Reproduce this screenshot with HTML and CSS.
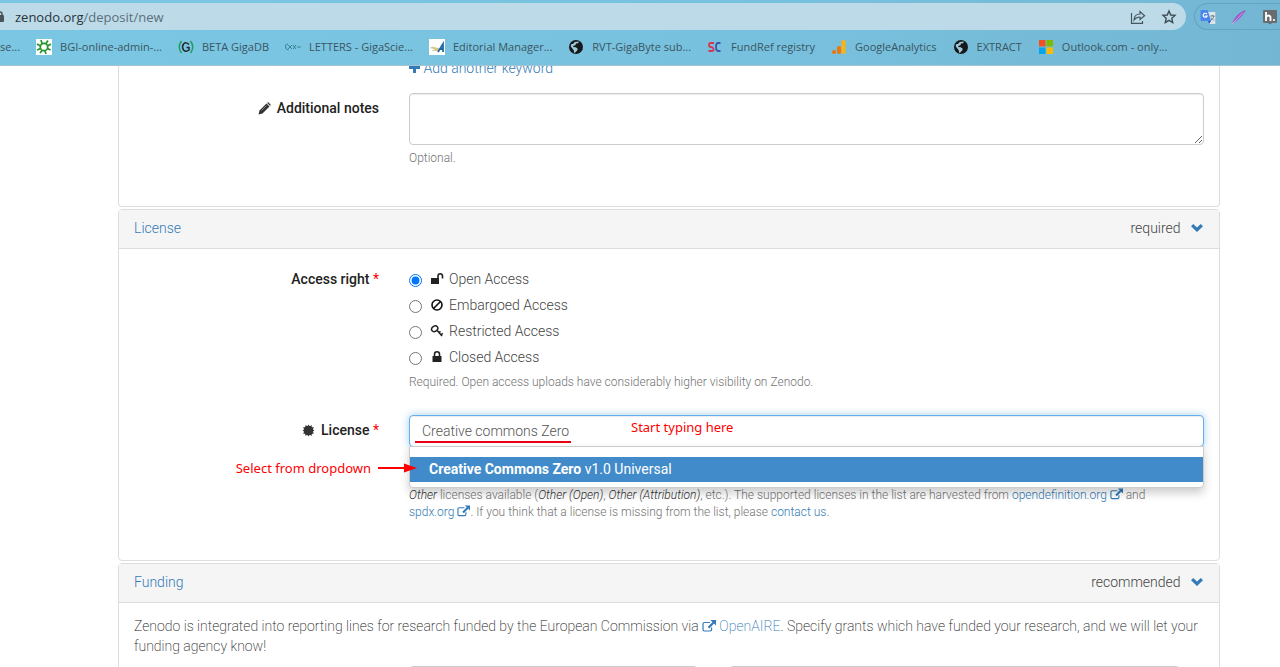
FILE: index.html
```html
<!DOCTYPE html>
<html lang="en">
<head>
<meta charset="utf-8">
<title>Zenodo – New upload</title>
<link rel="stylesheet" href="styles.css">
</head>
<body>
<svg width="0" height="0" class="sprite" aria-hidden="true">
  <symbol id="external" viewBox="0 0 14 12"><path d="M8 2.5H2.4Q1 2.5 1 3.9v5.7Q1 11 2.4 11h5.8q1.4 0 1.4-1.4V7.4" fill="none" stroke="currentColor" stroke-width="1.2"/><path d="M8.3 0H14v5.4l-1.9-1.8-4.8 4.9-1.6-1.6L10.5 2z" fill="currentColor"/></symbol>
  <symbol id="chevron" viewBox="0 0 14 10"><path d="M1 3.2 3.2 1 7 4.6 10.8 1 13 3.2 7 9z" fill="currentColor"/></symbol>
  <symbol id="globe" viewBox="0 0 16 16"><circle cx="8" cy="8" r="7" fill="#16191b"/><path d="M6.8 3 11 2.6l-1 1.6-2 .3-.6 1.8-1.8.4L5 8l2.8.3 1.9 1.4-.6 2-1.6 1.2-.4 1.1-1.1-.5-.1-2.1L4 9 2.6 7.2l.8-2.2 1.600.1z" fill="#9ccbdd"/></symbol>
</svg>

<header class="browser">
  <div class="toolbar">
    <div class="address">
      <svg class="address-lock" width="5" height="14" viewBox="5 0 5 14"><path d="M3 6V4a2 2 0 0 1 4 0v2" fill="none" stroke="#4a5358" stroke-width="1.5"/><rect x="0" y="5" width="9" height="7" rx="1" fill="#4a5358"/></svg>
      <span class="url"><b>zenodo.org</b>/deposit/new</span>
      <button class="icon-button" type="button" aria-label="Share"><svg width="16" height="16" viewBox="0 0 16 16" fill="none" stroke="#46565e" stroke-width="1.2"><path d="M1.5 4v10.3h11V12M4 11c.3-4 2.5-6 6-6V2.5L14.6 6.700 10 10.500V8C7.500 8 5.500 9 4 11z"/></svg></button>
      <button class="icon-button" type="button" aria-label="Bookmark this page"><svg width="16" height="16" viewBox="0 0 16 16" fill="none" stroke="#3d4c54" stroke-width="1.400"><path d="m8 2 1.700 4 4.300.4-3.200 2.900.9 4.200L8 11.300l-3.700 2.200.9-4.200L2 6.400 6.300 6z"/></svg></button>
    </div>
    <div class="extensions">
      <svg width="16" height="16" viewBox="0 0 16 16"><path d="M7 3h8.300v12H9z" fill="#dfe6e9"/><path d="M.5 1h7l3.700 11H2Q.5 12 .5 10.500z" fill="#4a86ec"/><path d="M8 12h3.200L9 15z" fill="#2c58c6"/><path d="M10.500 7h4M12.500 6v1M14 7c-.5 2-1.500 3-3 4M11 8.500l3 3" stroke="#6c7a80" fill="none"/><path d="M6.800 5a2 2 0 1 0 .3 2H5.200" fill="none" stroke="#fff" stroke-width="1.200"/></svg>
      <svg width="16" height="16" viewBox="0 0 16 16"><path d="M1 15C3 9 8 3 14.500 1 13 6 8 10 1 15z" fill="#9a55c4"/><path d="M1 15 12 3.500" stroke="#d9a5e8"/></svg>
      <svg width="16" height="16" viewBox="0 0 16 16"><path d="M2 1h12q1 0 1 1v11q0 1-1 1h-4l-2 1.500L6 14H2q-1 0-1-1V2q0-1 1-1z" fill="#686c6e"/><path d="M4 3v9M4 8q3-3 4.500 0v4" fill="none" stroke="#fff" stroke-width="1.800"/><circle cx="12" cy="11" r="1.100" fill="#fff"/></svg>
    </div>
  </div>
  <nav class="bookmarks">
    <a href="#">se...</a>
    <a href="#"><svg width="16" height="16" viewBox="0 0 16 16"><path fill="#fff" d="M0 0h16v16H0z"/><g fill="none" stroke="#26952c"><circle cx="8" cy="8" r="3.700" stroke-width="1.700"/><path d="M6 4.500 5 1M10 4.500l2-3M11.500 7 15 5M11.500 9.500l3 1.500M9 12l1 3M6 11.500 4 14M4.500 9.500 1 11M4.500 7 1 5" stroke-width="1.700"/></g></svg>BGI-online-admin-...</a>
    <a href="#"><svg width="16" height="16" viewBox="0 0 16 16" fill="none"><path d="M3.500 2Q-1 8 3.500 14M12.500 2q4.500 6 0 12" stroke="#239b60" stroke-width="1.500"/><path d="M11 5.500Q8 2.500 5.500 5 3.500 8 5.500 11q2.500 2.500 5.500 0V8.500H8.500" stroke="#20272b" stroke-width="1.500"/></svg>BETA GigaDB</a>
    <a href="#"><svg width="16" height="16" viewBox="0 0 16 16" fill="none" stroke="#388591"><path d="M3 5Q0 5 .5 8t3 3M3 6l4 4M7 6l-4 4M8 6l3 4M11 6 8 10M12 8h4"/></svg>LETTERS - GigaScie...</a>
    <a href="#"><svg width="16" height="16" viewBox="0 0 16 16"><path fill="#fff" d="M0 0h16v16H0z"/><path d="M1 9c4-3 6 1 10 0l-2 3-7-.2 4-1.500z" fill="#d4c58b"/><path d="M9 13 14 5v8M11 10h3" fill="none" stroke="#236b9d" stroke-width="1.800"/></svg>Editorial Manager...</a>
    <a href="#"><svg width="16" height="16"><use href="#globe"/></svg>RVT-GigaByte sub...</a>
    <a href="#"><svg width="16" height="16" viewBox="0 0 16 16" fill="none" stroke-width="1.800"><path d="M7 4H3.500Q2 4 2 6t2 2 2.500 2-2 2H1.500" stroke="#d7364e"/><path d="M13.500 4H11Q9 4 9 8t2 4h2.500" stroke="#3c5aa6"/></svg>FundRef registry</a>
    <a href="#"><svg width="16" height="16" viewBox="0 0 16 16"><circle cx="3" cy="13" r="2" fill="#ed750a"/><rect x="6" y="7" width="4" height="8" rx="2" fill="#ed750a"/><rect x="10.500" y="1" width="4" height="14" rx="1.500" fill="#fbb313"/></svg>GoogleAnalytics</a>
    <a href="#"><svg width="16" height="16"><use href="#globe"/></svg>EXTRACT</a>
    <a href="#"><svg width="16" height="16" viewBox="0 0 16 16"><path fill="#f25022" d="M1 1h6.500v6.500H1z"/><path fill="#7fba00" d="M8.500 1H15v6.500H8.500z"/><path fill="#00a4ef" d="M1 8.500h6.500V15H1z"/><path fill="#ffb900" d="M8.500 8.500H15V15H8.500z"/></svg>Outlook.com - only...</a>
  </nav>
</header>

<main class="page">
  <form class="content">
    <section class="panel panel-cut">
      <div class="row">
        <div class="field"><a class="add" href="#"><svg width="11" height="11" viewBox="0 0 11 11"><path d="M4 0h3v4h4v3H7v4H4V7H0V4h4z" fill="currentColor"/></svg> Add another keyword</a></div>
      </div>
      <div class="row notes-row">
        <label class="label" for="notes"><svg width="13" height="13" viewBox="0 0 13 13"><path d="M.5 12.500 1.500 8.500 8.500 1.500l3 3-7 7z" fill="#333"/><path d="m9.200.9 1-.8 2.700 2.700-.9 1zM3.500 8.500l5-5" fill="#222" stroke="#bbb" stroke-width=".6"/></svg>Additional notes</label>
        <div class="field"><textarea id="notes" class="control notes"></textarea><p class="help">Optional.</p></div>
      </div>
    </section>

    <section class="panel">
      <div class="panel-head"><a href="#">License</a><span class="state">required <a href="#" aria-label="Collapse License"><svg width="14" height="10"><use href="#chevron"/></svg></a></span></div>
      <div class="panel-body license-body">
        <div class="row" role="radiogroup" aria-labelledby="access">
          <span class="label" id="access">Access right <i class="star">*</i></span>
          <div class="field">
            <label class="option"><input type="radio" name="access" checked><svg width="14" height="14" viewBox="0 0 14 14"><path d="M1 6h8v6H1z" fill="#222"/><path d="M8 6.500V4q0-2.300 2.200-2.300T12.500 4v2.500" fill="none" stroke="#222" stroke-width="1.600"/></svg>Open Access</label>
            <label class="option"><input type="radio" name="access"><svg width="14" height="14" viewBox="0 0 14 14"><g fill="none" stroke="#111" stroke-width="1.600"><circle cx="7" cy="7" r="5"/><path d="m3.500 10.500 7-7"/></g></svg>Embargoed Access</label>
            <label class="option"><input type="radio" name="access"><svg width="14" height="14" viewBox="0 0 14 14"><g fill="none" stroke="#222" stroke-width="1.500"><ellipse cx="4.700" cy="4.800" rx="3.300" ry="2.600" transform="rotate(-35 4.700 4.800)"/><path d="m7 6.200 5 5.800M9 8.500l1.500-1.200M10.800 11l2-1.600"/></g></svg>Restricted Access</label>
            <label class="option"><input type="radio" name="access"><svg width="14" height="14" viewBox="0 0 14 14"><path d="M2.500 6h9v6h-9z" fill="#222"/><path d="M4.500 6.500V4.300q0-2.500 2.500-2.500t2.500 2.500v2.200" fill="none" stroke="#222" stroke-width="1.600"/></svg>Closed Access</label>
            <p class="help">Required. Open access uploads have considerably higher visibility on Zenodo.</p>
          </div>
        </div>
        <div class="row license-row">
          <label class="label" for="license"><svg width="13" height="13" viewBox="0 0 14 14"><g fill="#333"><circle cx="7" cy="7" r="5.200"/><path d="m7 .5 1.200 2.200L10.200 1l.3 2.500L13 3.800l-1.700 2L13.500 7l-2.200 1.200 1.700 2-2.500.3-.3 2.500-2-1.700L7 13.500l-1.200-2.200-2 1.700-.3-2.500-2.500-.3 1.700-2L.5 7l2.200-1.200L1 3.800l2.500-.3L3.800 1l2 1.700z"/></g></svg>License <i class="star">*</i></label>
          <div class="field">
            <div class="combo">
              <input id="license" class="control license-input" type="text" value="Creative commons Zero">
              <ul class="menu"><li><a href="#"><strong>Creative Commons Zero</strong> v1.0 Universal</a></li></ul>
              <span class="note-underline"></span>
              <span class="note note-type">Start typing here</span>
              <span class="note note-select">Select from dropdown <svg width="39" height="10" viewBox="0 0 39 10"><path d="M0 5h28" stroke="#f00" stroke-width="2"/><path d="M26 .5 39 5 26 9.500z" fill="#f00"/></svg></span>
            </div>
            <p class="help help-license"><em>Other</em> licenses available (<em>Other (Open)</em>, <em>Other (Attribution)</em>, etc.). The supported licenses in the list are harvested from <a href="#">opendefinition.org <svg width="13" height="12"><use href="#external"/></svg></a> and <a href="#">spdx.org <svg width="13" height="12"><use href="#external"/></svg></a>. If you think that a license is missing from the list, please <a href="#">contact us.</a></p>
          </div>
        </div>
      </div>
    </section>

    <section class="panel">
      <div class="panel-head"><a href="#">Funding</a><span class="state">recommended <a href="#" aria-label="Collapse Funding"><svg width="14" height="10"><use href="#chevron"/></svg></a></span></div>
      <div class="panel-body funding-body">
        <p class="intro">Zenodo is integrated into reporting lines for research funded by the European Commission via <a href="#"><svg width="14" height="12"><use href="#external"/></svg> OpenAIRE</a>. Specify grants which have funded your research, and we will let your funding agency know!</p>
        <div class="row"><div class="field grants"><select class="control" aria-label="Funder"><option></option></select><input class="control" type="text" aria-label="Grant"></div></div>
      </div>
    </section>
  </form>
</main>
</body>
</html>
```
FILE: styles.css
```css
* { box-sizing: border-box; }
body {
  margin: 0;
  height: 100vh;
  display: flex;
  flex-direction: column;
  overflow: hidden;
  background: #fff;
  color: #444;
  font: 300 14px/20px Roboto, sans-serif;
}
a { color: #337ab7; text-decoration: none; }
p { margin: 0; }
.sprite { position: absolute; }

/* Browser chrome */
.browser {
  flex: none;
  padding-top: 3px;
  background: linear-gradient(100deg, #7bc7e3, #78c1de 60%, #73b6d3);
  border-bottom: 1px solid #a3c4d0;
  color: #3a5561;
  font: 400 11px/16px "Open Sans", sans-serif;
}
.toolbar { display: flex; gap: 8px; }
.address {
  flex: 1;
  display: flex;
  align-items: center;
  gap: 15px;
  height: 27px;
  padding-right: 9px;
  border-radius: 0 14px 14px 0;
  background: #bddae8;
}
.address-lock { margin-right: -5px; }
.url { flex: 1; font-size: 13px; color: #5a707b; }
.url b { font-weight: 400; color: #26343a; }
.icon-button { display: flex; padding: 0; border: 0; background: none; }
.extensions {
  display: flex;
  align-items: center;
  gap: 15px;
  width: 86px;
  padding-left: 5px;
  border: 1px solid #62a3bd;
  border-right: 0;
  border-radius: 14px 0 0 14px;
}
.extensions svg { flex: none; }
.bookmarks { display: flex; gap: 16px; height: 35px; padding-bottom: 1px; align-items: center; white-space: nowrap; }
.bookmarks a { display: flex; align-items: center; gap: 8px; color: inherit; }

/* Page */
.page { flex: 1; min-height: 0; overflow: hidden; }
.content { margin: 0 60px 0 118px; }
.panel { margin-bottom: 2px; border: 1px solid #ddd; border-radius: 4px; }
.panel-cut { margin-top: -8px; padding-bottom: 39px; border-top: 0; border-radius: 0 0 4px 4px; }
.panel-head {
  display: flex;
  justify-content: space-between;
  padding: 8px 15px 10px;
  border-bottom: 1px solid #ddd;
  background: #f5f5f5;
}
.state svg { margin-left: 6px; }
.row { display: grid; grid-template-columns: 1fr 3fr; }
.label { grid-column: 1; padding-right: 15px; text-align: right; font-weight: 500; color: #222; }
.label svg { margin-right: 6px; vertical-align: -2px; }
.star { color: #f00; font-style: normal; font-weight: 400; }
.field { grid-column: 2; min-width: 0; padding: 0 15px; }
.control {
  display: block;
  width: 100%;
  height: 32px;
  padding: 5px 12px;
  border: 1px solid #ccc;
  border-radius: 4px;
  background: #fff;
  box-shadow: inset 0 1px 1px rgba(0, 0, 0, .08);
  color: #555;
  font: inherit;
}
.help { color: #737373; font-size: 12px; line-height: 17px; }
.help a { white-space: nowrap; }
.help svg { vertical-align: -1px; }
.notes-row { margin-top: 15px; }
.notes-row .label { padding-top: 5px; }
.notes { height: 52px; margin-bottom: 5px; resize: vertical; }

.license-body { padding: 20px 0 39px; }
.option { display: flex; align-items: center; height: 26px; }
.option input { width: 13px; height: 13px; margin: 2px 8px 0 0; }
.option svg { margin-right: 5px; }
[role="radiogroup"] .field { margin-top: -3px; }
[role="radiogroup"] .help { margin-top: 4px; }
.license-row { margin-top: 24px; }
.license-row .label { padding-top: 5px; }
.combo { position: relative; }
.license-input { border-color: #66afe9; box-shadow: inset 0 1px 1px rgba(0, 0, 0, .08), 0 0 8px rgba(102, 175, 233, .6); outline: 0; }
.menu {
  position: absolute;
  top: 100%;
  left: 0;
  width: 100%;
  margin: -1px 0 0;
  padding: 10px 0 5px;
  list-style: none;
  border: 1px solid #ccc;
  border-radius: 0 0 4px 4px;
  background: #fff;
  box-shadow: 0 5px 10px rgba(0, 0, 0, .2);
}
.menu a { display: block; padding: 2px 19px 3px; background: #428bca; color: #fff; font-weight: 400; }
.menu strong { font-weight: 700; }
.help-license { margin-top: 40px; }
.help-license em { color: #333; }

/* Red annotations drawn over the form */
.note { position: absolute; color: #f00; font: 13px/16px "Noto Sans", sans-serif; white-space: nowrap; }
.note-type { left: 222px; top: 4px; }
.note-select { right: 100%; top: 45px; margin-right: -8px; display: flex; align-items: center; gap: 7px; }
.note-underline { position: absolute; left: 6px; top: 26px; width: 156px; height: 2px; background: #e60012; }

.intro { padding: 13px 15px 10px; color: #222; font-weight: 200; }
.intro svg { vertical-align: -1px; }
.grants { display: grid; grid-template-columns: 289px 1fr; gap: 31px; padding-right: 39px; }
```
